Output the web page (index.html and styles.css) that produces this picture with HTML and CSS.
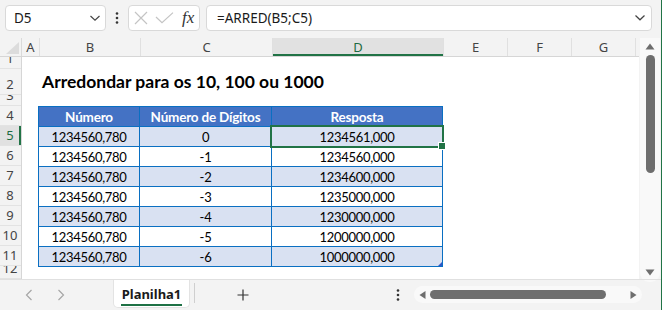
FILE: index.html
```html
<!DOCTYPE html>
<html>
<head>
<meta charset="utf-8">
<link rel="stylesheet" href="styles.css">
</head>
<body>
<div class="app">
  <div class="fbar">
    <div class="namebox">
      <span class="nb-text">D5</span>
      <svg class="chev" width="12" height="8" viewBox="0 0 12 8"><polyline points="1.5,2 6,6.2 10.5,2" fill="none" stroke="#444" stroke-width="1.2"/></svg>
    </div>
    <div class="vdots">
      <svg width="4" height="12" viewBox="0 0 4 12"><circle cx="2" cy="1.5" r="1.3" fill="#333"/><circle cx="2" cy="6" r="1.3" fill="#333"/><circle cx="2" cy="10.5" r="1.3" fill="#333"/></svg>
    </div>
    <div class="fxbox">
      <svg class="ic-x" width="14" height="14" viewBox="0 0 14 14"><path d="M1 1L13 13M13 1L1 13" stroke="#c4c4c4" stroke-width="1.2" fill="none"/></svg>
      <svg class="ic-ok" width="19" height="12" viewBox="0 0 19 12"><polyline points="1,5 7,10.6 18,0.6" fill="none" stroke="#c4c4c4" stroke-width="1.2"/></svg>
      <span class="fx">fx</span>
    </div>
    <div class="formula">
      <span class="f-text">=ARRED(B5;C5)</span>
      <svg class="chev" width="12" height="8" viewBox="0 0 12 8"><polyline points="1.5,1.5 6,5.8 10.5,1.5" fill="none" stroke="#444" stroke-width="1.2"/></svg>
    </div>
  </div>

  <div class="main">
    <div class="sheet">
      <div class="colhdr">
        <div class="corner"><span class="tri"></span></div>
        <div class="ch">A</div>
        <div class="ch">B</div>
        <div class="ch">C</div>
        <div class="ch ch-sel">D</div>
        <div class="ch">E</div>
        <div class="ch">F</div>
        <div class="ch">G</div>
        <div class="ch ch-end"></div>
      </div>
      <div class="body">
        <div class="rowhdr">
          <div class="rh">1</div>
          <div class="rh">2</div>
          <div class="rh">3</div>
          <div class="rh">4</div>
          <div class="rh rh-sel">5</div>
          <div class="rh">6</div>
          <div class="rh">7</div>
          <div class="rh">8</div>
          <div class="rh">9</div>
          <div class="rh">10</div>
          <div class="rh">11</div>
          <div class="rh">12</div>
        </div>
        <div class="cells">
          <div class="title">Arredondar para os 10, 100 ou 1000</div>
          <div class="tbl">
            <div class="th">Número</div>
            <div class="th">Número de Dígitos</div>
            <div class="th">Resposta</div>

            <div class="td band">1234560,780</div>
            <div class="td band">0</div>
            <div class="td band sel">1234561,000</div>

            <div class="td">1234560,780</div>
            <div class="td">-1</div>
            <div class="td">1234560,000</div>

            <div class="td band">1234560,780</div>
            <div class="td band">-2</div>
            <div class="td band">1234600,000</div>

            <div class="td">1234560,780</div>
            <div class="td">-3</div>
            <div class="td">1235000,000</div>

            <div class="td band">1234560,780</div>
            <div class="td band">-4</div>
            <div class="td band">1230000,000</div>

            <div class="td">1234560,780</div>
            <div class="td">-5</div>
            <div class="td">1200000,000</div>

            <div class="td band">1234560,780</div>
            <div class="td band">-6</div>
            <div class="td band last">1000000,000</div>
          </div>
        </div>
      </div>
    </div>
    <div class="vscroll">
      <div class="vtrack">
        <svg class="v-up" width="10" height="7" viewBox="0 0 10 7"><path d="M5 0.5L9.5 6.5H0.5Z" fill="#6e6e6e"/></svg>
        <div class="vthumb"></div>
        <div class="vspace"></div>
        <svg class="v-down" width="10" height="7" viewBox="0 0 10 7"><path d="M0.5 0.5H9.5L5 6.5Z" fill="#6e6e6e"/></svg>
      </div>
    </div>
  </div>

  <div class="tabbar">
    <div class="navs">
      <svg width="8" height="12" viewBox="0 0 8 12"><polyline points="6.5,1 1.5,6 6.5,11" fill="none" stroke="#a6a6a6" stroke-width="1.2"/></svg>
      <svg width="8" height="12" viewBox="0 0 8 12"><polyline points="1.5,1 6.5,6 1.5,11" fill="none" stroke="#a6a6a6" stroke-width="1.2"/></svg>
    </div>
    <div class="tab"><span class="tab-text">Planilha1</span></div>
    <div class="tdiv"></div>
    <div class="plus">
      <svg width="12" height="12" viewBox="0 0 12 12"><path d="M6 0.5V11.5M0.5 6H11.5" stroke="#333" stroke-width="1.2"/></svg>
    </div>
    <div class="hdots">
      <svg width="4" height="12" viewBox="0 0 4 12"><circle cx="2" cy="1.5" r="1.3" fill="#333"/><circle cx="2" cy="6" r="1.3" fill="#333"/><circle cx="2" cy="10.5" r="1.3" fill="#333"/></svg>
    </div>
    <div class="htrack">
      <svg width="7" height="8" viewBox="0 0 7 8"><path d="M0.5 4L6.5 0V8Z" fill="#6e6e6e"/></svg>
      <div class="hthumb"></div>
      <svg width="7" height="8" viewBox="0 0 7 8"><path d="M6.5 4L0.5 0V8Z" fill="#6e6e6e"/></svg>
    </div>
  </div>
</div>
</body>
</html>
```

FILE: styles.css
```css
* { box-sizing: border-box; margin: 0; padding: 0; }
html, body { width: 662px; height: 310px; overflow: hidden; }
body {
  background: #f3f3f3;
  font-family: "Noto Sans", sans-serif;
  color: #222;
}
.app {
  width: 662px;
  height: 310px;
  border-right: 1px solid #217346;
  display: flex;
  flex-direction: column;
}

/* formula bar */
.fbar {
  height: 38px;
  display: flex;
  align-items: flex-start;
  padding: 5px 0 0 5px;
}
.namebox, .fxbox, .formula {
  height: 26px;
  background: #fff;
  border: 1px solid #d9d9d9;
  border-radius: 4px;
  display: flex;
  align-items: center;
}
.namebox {
  width: 101px;
  padding: 0 4px 0 8px;
  justify-content: space-between;
}
.nb-text, .f-text {
  font-size: 13.5px;
  color: #1a1a1a;
}
.vdots {
  width: 22px;
  height: 26px;
  display: flex;
  align-items: center;
  justify-content: center;
}
.fxbox {
  width: 72px;
  padding: 0 0 0 5px;
}
.ic-x { margin-right: 7px; }
.ic-ok { margin-right: 8px; }
.fx {
  font-family: "Liberation Serif", "DejaVu Serif", serif;
  font-style: italic;
  font-size: 17px;
  color: #333;
  line-height: 1;
  margin-top: -2px;
}
.formula {
  margin-left: 6px;
  width: 446px;
  padding: 0 5px 0 10px;
  justify-content: space-between;
}

/* main */
.main {
  height: 241px;
  display: flex;
}
.sheet {
  width: 639px;
  display: flex;
  flex-direction: column;
  background: #fff;
}
.colhdr {
  height: 19px;
  display: grid;
  grid-template-columns: 22px 18px 101px 132px 171px 64px 64px 64px 3px;
  background: #f3f3f3;
  border-bottom: 1px solid #d6d6d6;
}
.corner {
  position: relative;
  border-right: 1px solid #dadada;
}
.tri {
  position: absolute;
  right: 2px;
  bottom: 2px;
  width: 0;
  height: 0;
  border-left: 13px solid transparent;
  border-bottom: 12px solid #dcdcdc;
}
.ch {
  display: flex;
  align-items: center;
  justify-content: center;
  font-size: 13px;
  color: #444;
  border-right: 1px solid #e0e0e0;
}
.ch-end { border-right: none; }
.ch-sel {
  background: #e1e1e1;
  color: #1d6b42;
  box-shadow: inset 0 -2px 0 #217346;
}
.body {
  flex: 1;
  display: flex;
  overflow: hidden;
}
.rowhdr {
  width: 22px;
  display: grid;
  grid-template-rows: 12px 26px 11px repeat(8, 20px) 13px;
  background: #f3f3f3;
  border-right: 1px solid #d6d6d6;
}
.rh {
  display: flex;
  align-items: flex-end;
  justify-content: center;
  padding: 0 1px 3px 0;
  font-size: 13px;
  line-height: 14px;
  color: #444;
  border-bottom: 1px solid #e3e3e3;
  overflow: hidden;
}
.rh-sel {
  background: #e1e1e1;
  color: #1d6b42;
  box-shadow: inset -2px 0 0 #217346;
}
.cells {
  flex: 1;
  display: grid;
  grid-template-columns: 17px 101px 132px 171px 64px 64px 64px 3px;
  grid-template-rows: 12px 26px 11px repeat(8, 20px) 13px;
}
.title {
  grid-column: 2 / 8;
  grid-row: 2;
  align-self: end;
  padding: 0 0 2px 3px;
  font-family: "Lato", sans-serif;
  font-weight: 700;
  font-size: 17.5px;
  line-height: 22px;
  color: #000;
  white-space: nowrap;
}
.tbl {
  grid-column: 2 / 5;
  grid-row: 4 / 12;
  align-self: start;
  height: 161px;
  margin-left: -1px;
  display: grid;
  grid-template-columns: 101px 132px 171px;
  grid-auto-rows: 20px;
  border-left: 1px solid #0a6fc2;
  border-top: 1px solid #0a6fc2;
  font-family: "Lato", sans-serif;
  font-size: 13px;
  position: relative;
}
.th, .td {
  display: flex;
  align-items: center;
  justify-content: center;
  border-right: 1px solid #0a6fc2;
  border-bottom: 1px solid #0a6fc2;
  white-space: nowrap;
}
.th {
  background: #4472c4;
  color: #fff;
  font-weight: 700;
  font-size: 13.5px;
  letter-spacing: -0.2px;
}
.td {
  color: #000;
  letter-spacing: -0.3px;
}
.band { background: #d9e1f2; }
.sel { position: relative; }
.sel::after {
  content: "";
  position: absolute;
  left: -2px;
  top: -2px;
  right: -2px;
  bottom: -2px;
  border: 2px solid #217346;
}
.sel::before {
  content: "";
  position: absolute;
  right: -4px;
  bottom: -4px;
  width: 6px;
  height: 6px;
  background: #217346;
  border: 1px solid #fff;
  z-index: 2;
}
.last { position: relative; }
.last::after {
  content: "";
  position: absolute;
  right: 0;
  bottom: 0;
  width: 0;
  height: 0;
  border-left: 4px solid transparent;
  border-bottom: 4px solid #2f55c8;
}

/* vertical scrollbar */
.vscroll {
  width: 22px;
  padding: 0 1px 0 1px;
}
.vtrack {
  height: 244px;
  background: #f9f9f9;
  border-radius: 0 0 9px 9px;
  display: flex;
  flex-direction: column;
  align-items: center;
  padding: 5px 0 6px 0;
}
.v-up { flex: none; }
.vthumb {
  margin-top: 5px;
  width: 9px;
  height: 118px;
  background: #6e6e6e;
  border-radius: 5px;
}
.vspace { flex: 1; }
.v-down { flex: none; }

/* tab bar */
.tabbar {
  height: 31px;
  display: flex;
  align-items: flex-start;
  border-top: 1px solid #e0e0e0;
}
.navs {
  width: 113px;
  height: 30px;
  display: flex;
  align-items: center;
  padding-left: 25px;
  gap: 24px;
}
.tab {
  width: 77px;
  height: 28px;
  background: #fff;
  border: 1px solid #e3e3e3;
  border-top: none;
  border-radius: 0 0 5px 5px;
  display: flex;
  justify-content: center;
  padding-top: 6px;
}
.tab-text {
  font-family: "Noto Sans", sans-serif;
  font-weight: 700;
  font-size: 13px;
  line-height: 16px;
  height: 20px;
  color: #1a1a1a;
  border-bottom: 2px solid #1e7145;
  padding: 0 1px;
}
.tdiv {
  width: 1px;
  height: 20px;
  margin: 3px 0 0 4px;
  background: #cfcfcf;
}
.plus {
  width: 95px;
  height: 30px;
  display: flex;
  align-items: center;
  padding-left: 42px;
}
.hdots {
  width: 124px;
  height: 30px;
  display: flex;
  align-items: center;
  justify-content: flex-end;
  padding-right: 14px;
}
.htrack {
  margin-top: 6px;
  width: 228px;
  height: 17px;
  background: #f9f9f9;
  border-radius: 9px;
  display: flex;
  align-items: center;
  padding: 0 5px 0 5px;
}
.hthumb {
  width: 176px;
  height: 9px;
  margin: 0 24px 0 4px;
  background: #6e6e6e;
  border-radius: 5px;
}
```
